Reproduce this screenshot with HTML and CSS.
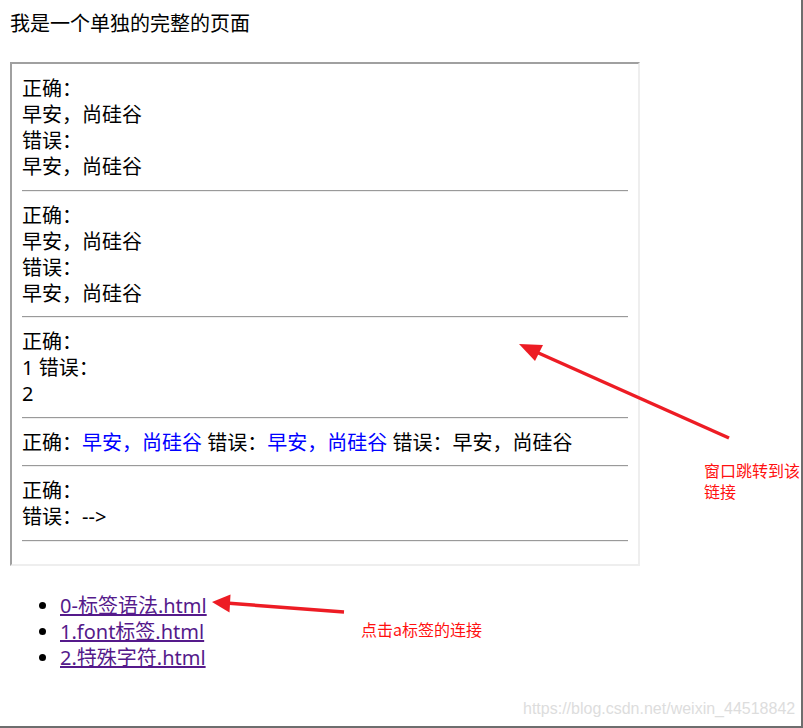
FILE: index.html
```html
<!DOCTYPE html>
<html lang="zh-CN">
<head>
<meta charset="utf-8">
<title>页面</title>
<link rel="stylesheet" href="styles.css">
</head>
<body>
<div class="page">
  <div class="title">我是一个单独的完整的页面</div>
  <div class="frame">
    <div class="sec">正确：<br>早安，尚硅谷<br>错误：<br>早安，尚硅谷</div>
    <hr class="rule">
    <div class="sec">正确：<br>早安，尚硅谷<br>错误：<br>早安，尚硅谷</div>
    <hr class="rule">
    <div class="sec">正确：<br>1 错误：<br>2</div>
    <hr class="rule">
    <div class="sec">正确：<span class="blue">早安，尚硅谷</span> 错误：<span class="blue">早安，尚硅谷</span> 错误：早安，尚硅谷</div>
    <hr class="rule">
    <div class="sec">正确：<br>错误：--&gt;</div>
    <hr class="rule">
  </div>
  <ul class="links">
    <li><a href="#">0-标签语法.html</a></li>
    <li><a href="#">1.font标签.html</a></li>
    <li><a href="#">2.特殊字符.html</a></li>
  </ul>

  <svg class="arrows" width="803" height="728" viewBox="0 0 803 728">
    <line x1="729" y1="438" x2="534" y2="351" stroke="#ed1c24" stroke-width="3.5"/>
    <polygon points="519,344 543,345 535,361" fill="#ed1c24"/>
    <line x1="344" y1="612" x2="226" y2="603" stroke="#ed1c24" stroke-width="3.5"/>
    <polygon points="212,602 230.5,594.5 229.5,612.5" fill="#ed1c24"/>
  </svg>
  <div class="note note-window">窗口跳转到该<br>链接</div>
  <div class="note note-click">点击a标签的连接</div>
  <div class="watermark">https://blog.csdn.net/weixin_44518842</div>
</div>
</body>
</html>
```

FILE: styles.css
```css
html, body {
  margin: 0;
  padding: 0;
  background: #ffffff;
}

.page {
  position: relative;
  width: 801px;
  height: 726px;
  border-right: 2px solid #6e6e6e;
  border-bottom: 2px solid #6e6e6e;
  padding: 0;
  background: #ffffff;
  font-family: "Noto Sans", "Noto Sans CJK SC", sans-serif;
  font-size: 20px;
  line-height: 26px;
  color: #000000;
  overflow: hidden;
}

.title {
  padding: 11px 0 0 10px;
  height: 26px;
}

.frame {
  margin: 25px 0 0 10px;
  width: 606px;
  height: 488px;
  padding: 12px 10px 0 10px;
  border-style: solid;
  border-width: 2px;
  border-color: #a0a0a0 #eeeeee #eeeeee #a0a0a0;
}

.sec {
  margin: 0;
}

.blue {
  color: #0000ff;
}

.rule {
  height: 0;
  margin: 9.5px 0 11px 0;
  border: 0;
  border-top: 1px solid #9a9a9a;
  border-bottom: 1px solid #eeeeee;
}

.links {
  margin: 27px 0 0 10px;
  padding: 0 0 0 50px;
  list-style: disc;
}

.links a {
  color: #551a8b;
  text-decoration: underline;
}

.arrows {
  position: absolute;
  left: 0;
  top: 0;
  pointer-events: none;
}

.note {
  position: absolute;
  color: #ff1010;
  font-family: "Noto Sans CJK SC", sans-serif;
  font-size: 16px;
  line-height: 21px;
  white-space: nowrap;
}

.note-window {
  left: 704px;
  top: 460px;
}

.note-click {
  left: 361px;
  top: 619px;
}

.watermark {
  position: absolute;
  left: 523px;
  top: 699px;
  font-family: "Liberation Sans", Arial, sans-serif;
  font-size: 16px;
  line-height: 20px;
  color: #dddddd;
  white-space: nowrap;
}
```
